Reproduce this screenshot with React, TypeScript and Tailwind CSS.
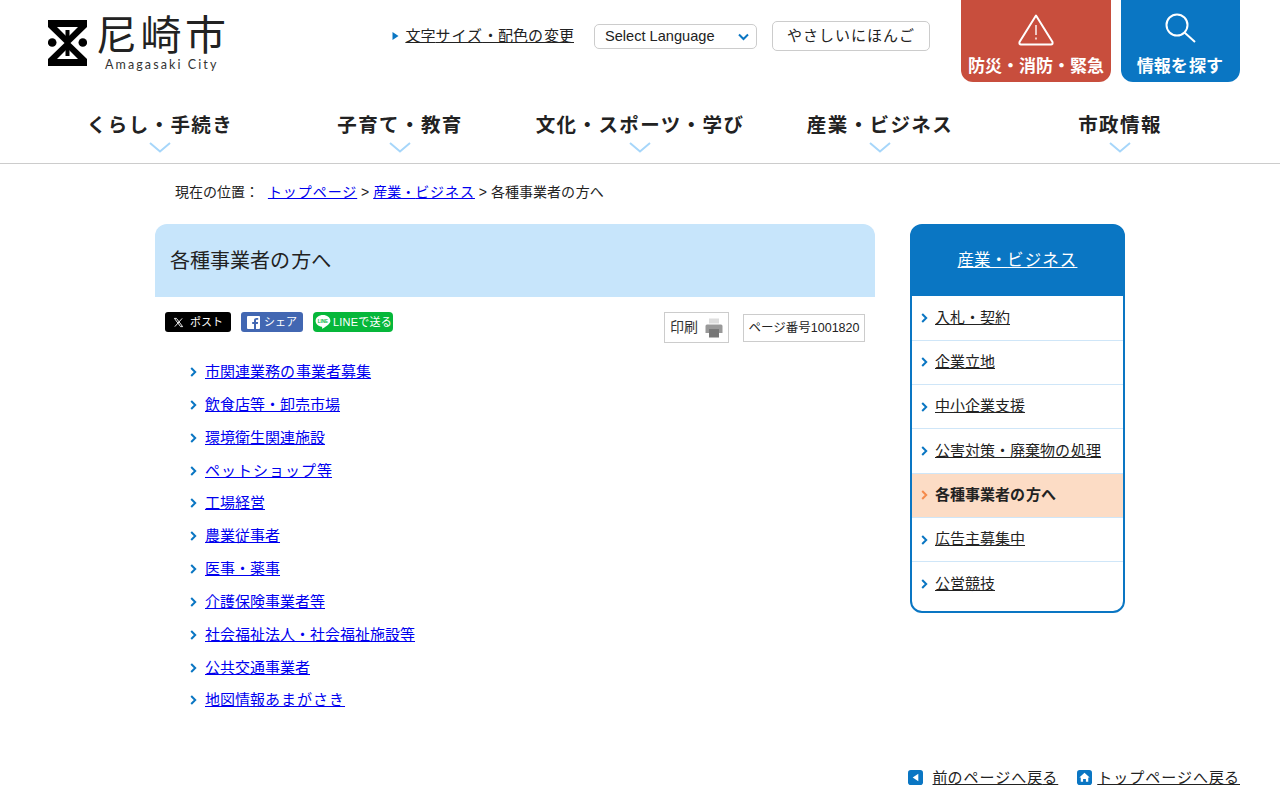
import React from "react";

const nav = ["くらし・手続き", "子育て・教育", "文化・スポーツ・学び", "産業・ビジネス", "市政情報"];
const links = ["市関連業務の事業者募集", "飲食店等・卸売市場", "環境衛生関連施設", "ペットショップ等", "工場経営", "農業従事者", "医事・薬事", "介護保険事業者等", "社会福祉法人・社会福祉施設等", "公共交通事業者", "地図情報あまがさき"];
const side = ["入札・契約", "企業立地", "中小企業支援", "公害対策・廃棄物の処理", "各種事業者の方へ", "広告主募集中", "公営競技"];

// Kana in the picture run slightly wider than kanji.
function K({ t }: { t: string }) {
  return (
    <>
      {t.split(/([\u3041-\u30fa\u30fc-\u30ff]+)/).map((p, i) =>
        i % 2 === 1 ? (
          <span key={i} className="tracking-[0.0667em]">{p}</span>
        ) : (
          <React.Fragment key={i}>{p}</React.Fragment>
        )
      )}
    </>
  );
}

function Chev({ color = "#0a76c3", className = "" }: { color?: string; className?: string }) {
  return (
    <svg width="7" height="10" viewBox="0 0 7 10" className={className}>
      <path d="M1.2 1 L5.2 5 L1.2 9" fill="none" stroke={color} strokeWidth="2" />
    </svg>
  );
}

function Logo() {
  return (
    <div className="flex flex-col w-[178px] mt-[14px]">
      <div className="flex items-start h-[52px]">
        <svg width="39" height="46" viewBox="0 0 39 46" className="mt-[6px] shrink-0">
          <path d="M0 0H39V7L22.500 23 39 39V46H0V39L16.500 23 0 7Z" fill="#000" />
          <path d="M9 7H30L19.500 17.500Z" fill="#fff" />
          <path d="M9 39H30L19.500 28.500Z" fill="#fff" />
          <rect x="17.500" y="10" width="4" height="26" fill="#000" />
          <circle cx="4.200" cy="22.500" r="4.300" fill="#000" />
          <circle cx="34.800" cy="22.500" r="4.300" fill="#000" />
        </svg>
        <span className="ml-[9px] mt-[4px] text-[41px] leading-[36px] tracking-[3.5px] text-[#222] font-normal whitespace-nowrap">尼崎市</span>
      </div>
      <span className="ml-[57px] -mt-[8px] text-[12.5px] leading-[14px] tracking-[2.1px] text-[#333] font-['Lato',sans-serif] whitespace-nowrap">Amagasaki City</span>
    </div>
  );
}

export default function App() {
  return (
    <div className="bg-white text-[#222] text-[15px] font-['Liberation_Sans','Noto_Sans_CJK_JP',sans-serif] h-[800px] overflow-hidden">
      <header className="border-b border-[#ccc] h-[164px]">
        <div className="flex justify-between px-[48px] pr-[40px] h-[100px]">
          <Logo />
          <div className="flex items-start">
            <div className="flex items-center mt-[21px]">
              <svg width="7" height="8" viewBox="0 0 7 8" className="mr-[6px]"><path d="M0.500 0 L6.500 4 L0.500 8Z" fill="#0a76c3" /></svg>
              <a href="#" className="underline text-[#222] text-[15px] leading-[28px] whitespace-nowrap"><K t="文字サイズ・配色の変更" /></a>
              <div className="ml-[20px] w-[163px] h-[25px] border border-[#ccc] rounded-[5px] flex items-center justify-between pl-[10px] pr-[7px] text-[14.6px]">
                <span className="pt-[1px]">Select Language</span>
                <svg width="11" height="8" viewBox="0 0 11 8" className="mt-[1px]"><path d="M1 1.500 L5.500 6 L10 1.500" fill="none" stroke="#0a76c3" strokeWidth="2" /></svg>
              </div>
              <div className="ml-[15px] w-[158px] h-[30px] border border-[#ccc] rounded-[5px] flex items-center justify-center text-[15px] whitespace-nowrap"><K t="やさしいにほんご" /></div>
            </div>
            <div className="ml-[31px] w-[150px] h-[82px] bg-[#c84e3d] rounded-b-[12px] text-white flex flex-col items-center">
              <svg width="36" height="32" viewBox="0 0 36 32" className="mt-[14px]">
                <path d="M18 1.500 L34.500 28 Q35 30.500 33 30.500 H3 Q1 30.500 1.500 28 Z" fill="none" stroke="#fff" strokeWidth="2" strokeLinejoin="round" />
                <rect x="17.300" y="11" width="1.400" height="10" fill="#fff" />
                <rect x="17.300" y="23.500" width="1.400" height="2" fill="#fff" />
              </svg>
              <span className="mt-[9px] text-[17px] leading-[24px] font-bold whitespace-nowrap">防災・消防・緊急</span>
            </div>
            <div className="ml-[10px] w-[119px] h-[82px] bg-[#0a76c3] rounded-b-[12px] text-white flex flex-col items-center">
              <svg width="32" height="32" viewBox="0 0 32 32" className="mt-[12px]">
                <circle cx="12" cy="13" r="10.500" fill="none" stroke="#fff" strokeWidth="2" />
                <path d="M19.500 20.500 L30 30" stroke="#fff" strokeWidth="2" fill="none" />
              </svg>
              <span className="mt-[11px] text-[17px] leading-[24px] font-bold whitespace-nowrap"><K t="情報を探す" /></span>
            </div>
          </div>
        </div>
        <nav className="flex px-[40px]">
          {nav.map((n) => (
            <div key={n} className="w-[240px] flex flex-col items-center">
              <span className="mt-[11px] text-[19.5px] leading-[28px] font-bold tracking-[1.4px] text-[#222] whitespace-nowrap">{n}</span>
              <svg width="24" height="12" viewBox="0 0 24 12" className="mt-[2.5px]"><path d="M2 1 L12 9.500 L22 1" fill="none" stroke="#a6d6fa" strokeWidth="2" /></svg>
            </div>
          ))}
        </nav>
      </header>

      <main className="w-[970px] ml-[155px]">
        <div className="pl-[20px] pt-[18px] h-[60px] text-[14px] leading-[20px] whitespace-nowrap">
          現在の位置： <a href="#" className="underline text-[#0000ee] ml-[5px]"><K t="トップページ" /></a> &gt; <a href="#" className="underline text-[#0000ee]"><K t="産業・ビジネス" /></a> &gt; <K t="各種事業者の方へ" />
        </div>
        <div className="flex justify-between">
          <div className="w-[720px]">
            <h1 className="h-[73px] bg-[#c7e5fb] rounded-t-[12px] pl-[15px] flex items-center text-[20px] font-normal"><span><K t="各種事業者の方へ" /></span></h1>
            <div className="flex justify-between pt-[15px] pl-[10px] pr-[10px] h-[58.6px]">
              <div className="flex gap-[10px] items-start">
                <div className="w-[66px] h-[20px] bg-black rounded-[3px] text-white text-[11px] flex items-center justify-center gap-[6px]">
                  <svg width="11" height="11" viewBox="0 0 24 24"><path fill="none" stroke="#fff" strokeWidth="2" d="M3 3h4.500L21 21h-4.500ZM20 3 4 21" /></svg>
                  <span>ポスト</span>
                </div>
                <div className="w-[62px] h-[20px] bg-[#4267b2] rounded-[3px] text-white text-[11px] flex items-center justify-center gap-[4px]">
                  <svg width="13" height="13" viewBox="0 0 13 13"><rect width="13" height="13" rx="1" fill="#fff" /><path d="M9 13V8h1.800l.3-2H9V4.800c0-.6.2-1 1-1h1.200V2c-.3 0-.9-.1-1.600-.1C8 1.900 7 2.800 7 4.500V6H5.200v2H7v5Z" fill="#4267b2" /></svg>
                  <span>シェア</span>
                </div>
                <div className="w-[80px] h-[20px] bg-[#06b73a] rounded-[4px] text-white text-[11px] flex items-center pl-[2px] gap-[2px] whitespace-nowrap">
                  <svg width="16" height="16" viewBox="0 0 16 16"><path d="M8 1C3.900 1 .6 3.600 .6 6.900c0 2.900 2.600 5.300 6.200 5.800.6.100.3 1.300.2 1.700 0 .3.200.4.500.2 1.600-.9 5.900-3.500 7.100-5.600.5-.7.800-1.400.8-2.100C15.400 3.600 12.100 1 8 1Z" fill="#fff" /><text x="8" y="8.700" textAnchor="middle" fontSize="4.500" fontWeight="700" fill="#06b73a">LINE</text></svg>
                  <span className="tracking-[0.2px]">LINEで送る</span>
                </div>
              </div>
              <div className="flex items-start">
                <div className="w-[65px] h-[31px] border border-[#ccc] flex items-center pl-[5px] text-[14px] text-[#333]">
                  <span>印刷</span>
                  <svg width="18" height="20" viewBox="0 0 18 20" className="ml-[7px]">
                    <rect x="4" y="0.500" width="10" height="5" fill="#ddd" />
                    <path d="M0.500 8 Q0.500 6.500 2 6.500 H16 Q17.500 6.500 17.500 8 V15 H0.500Z" fill="#999" />
                    <rect x="4" y="11" width="10" height="8.500" fill="#777" />
                  </svg>
                </div>
                <div className="ml-[14px] mt-[2px] w-[122px] h-[28px] border border-[#ccc] flex items-center justify-center text-[12.5px] whitespace-nowrap">ページ番号1001820</div>
              </div>
            </div>
            <ul className="pl-[35px]">
              {links.map((l) => (
                <li key={l} className="h-[32.85px] flex items-center">
                  <Chev />
                  <a href="#" className="ml-[8px] underline text-[#0000ee] leading-[20px]"><K t={l} /></a>
                </li>
              ))}
            </ul>
          </div>
          <aside className="w-[215px] h-[389px] border-2 border-[#0a76c3] rounded-[12px]">
            <div className="h-[71.4px] -mx-px -mt-px rounded-t-[11px] bg-[#0a76c3] flex items-center justify-center">
              <a href="#" className="underline text-white text-[16.5px]"><K t="産業・ビジネス" /></a>
            </div>
            {side.map((s, i) => {
              const cur = s === "各種事業者の方へ";
              return (
                <div key={s} className={`h-[44.3px] flex items-center pl-[9px] ${i < 6 ? "border-b border-[#cfe6f8]" : ""} ${cur ? "bg-[#fcdcc5]" : ""}`}>
                  <Chev color={cur ? "#f58a4b" : "#0a76c3"} />
                  {cur ? (
                    <span className="ml-[7px] font-bold text-[#222]"><K t={s} /></span>
                  ) : (
                    <a href="#" className="ml-[7px] underline text-[#222]"><K t={s} /></a>
                  )}
                </div>
              );
            })}
          </aside>
        </div>
      </main>

      <div className="flex justify-end items-center pr-[40px] mt-[50px] text-[15px] leading-[22px] whitespace-nowrap">
        <svg width="15" height="15" viewBox="0 0 16 16"><rect width="16" height="16" rx="3" fill="#0a76c3" /><path d="M11 4 V12 L5 8Z" fill="#fff" /></svg>
        <a href="#" className="ml-[10px] underline text-[#222]"><K t="前のページへ戻る" /></a>
        <svg width="15" height="15" viewBox="0 0 16 16" className="ml-[19px]"><rect width="16" height="16" rx="3" fill="#0a76c3" /><path d="M8 3 L13.500 8 H12 V12.500 H9.500 V9.500 H6.500 V12.500 H4 V8 H2.500Z" fill="#fff" /></svg>
        <a href="#" className="ml-[5px] underline text-[#222]"><K t="トップページへ戻る" /></a>
      </div>
    </div>
  );
}
